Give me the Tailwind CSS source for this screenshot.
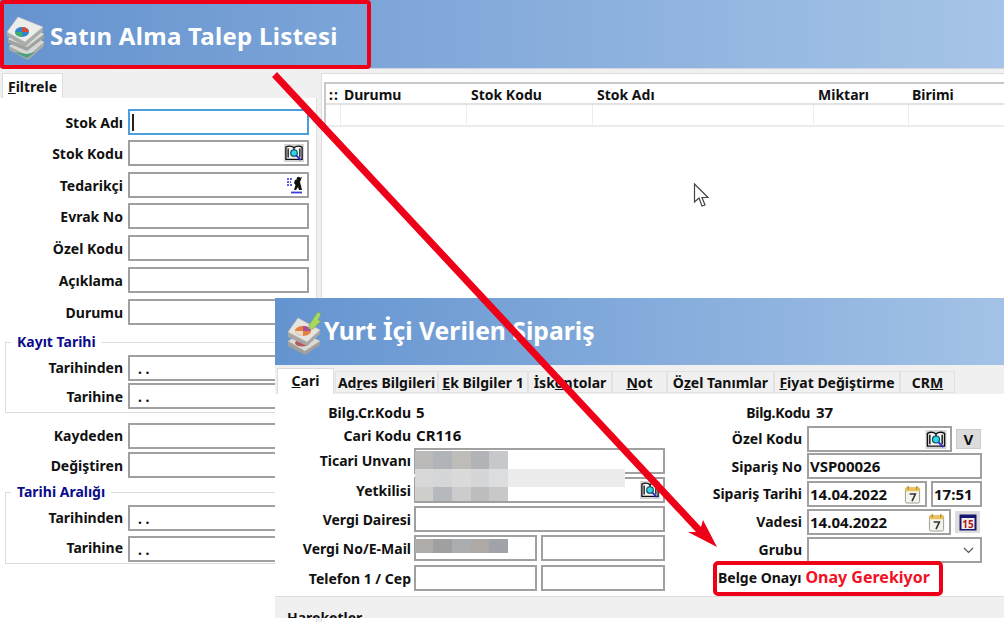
<!DOCTYPE html>
<html lang="tr">
<head>
<meta charset="utf-8">
<script src="https://cdn.jsdelivr.net/npm/@tailwindcss/browser@4"></script>
</head>
<body class="m-0 bg-white">
<svg width="0" height="0" class="absolute">
  <defs>
    <symbol id="book" viewBox="0 0 22 20">
      <rect width="22" height="20" fill="#d4d4d4"/>
      <path d="M2 3.500C5 2 8 2 11 4C14 2 17 2 20 3.500V17H2Z" fill="#f4f4f4" stroke="#111" stroke-width="1.500"/>
      <path d="M4.500 5V15M17.500 5V15M11 4V7" stroke="#222" stroke-width="1.600"/>
      <circle cx="11" cy="10" r="3.700" fill="#2fd6e8" stroke="#0a4a5a" stroke-width="1.200"/>
      <path d="M13.500 12.700L18.500 18" stroke="#2a2ad0" stroke-width="2"/>
    </symbol>
    <symbol id="cal" viewBox="0 0 18 20">
      <rect x="1.500" y="3" width="15" height="16" rx="1.500" fill="#f4f4ee" stroke="#9a9a8a"/>
      <rect x="1.500" y="2.500" width="15" height="4" fill="#ecc25a"/>
      <path d="M4.500 1V5M13.500 1V5" stroke="#b89030" stroke-width="1.400"/>
      <path d="M6 9.500H12L8.500 17" fill="none" stroke="#333" stroke-width="1.700"/>
    </symbol>
    <symbol id="stack" viewBox="0 0 42 46">
      <path d="M4 32L24 20L39 28V32L23 46L4 36Z" fill="#a8aca8"/>
      <path d="M4 32L24 19L39 28L23 42Z" fill="#d6d8d6"/>
      <path d="M3 25L22 12L39 20V24L22 37L3 29Z" fill="#9fa3a0"/>
      <path d="M3 25L22 11L39 20L22 33Z" fill="#dcdedc"/>
      <path d="M2 18L13 3L38 13V17L20 33L2 22Z" fill="#a9ada9"/>
      <path d="M2 18L13 3L38 13L20 28Z" fill="#eceeec" stroke="#bcbcbc" stroke-width="0.600"/>
      <ellipse cx="17" cy="18" rx="7" ry="5" fill="#2f86cc"/>
      <path d="M17 18L24 18A7 5 0 0 0 17 13Z" fill="#d84a3a"/>
      <path d="M17 18L10 18A7 5 0 0 0 17 23Z" fill="#3fae6a"/>
      <path d="M9 38L22 44L30 38L22 40Z" fill="#4aa080"/>
    </symbol>
    <symbol id="stack2" viewBox="0 0 38 50">
      <path d="M4 33L19 26L36 33V37L21 47L4 38Z" fill="#a2a09c"/>
      <path d="M4 33L19 25L36 33L21 43Z" fill="#dcdad6"/>
      <ellipse cx="18" cy="35" rx="7" ry="3.500" fill="#b45a60"/>
      <path d="M4 24L14 10L36 22V26L23 38L4 29Z" fill="#a8a6a2"/>
      <path d="M4 24L14 10L36 22L23 34Z" fill="#e6e4e0" stroke="#bbb" stroke-width="0.600"/>
      <ellipse cx="19" cy="23" rx="8" ry="5" fill="#e0803a"/>
      <path d="M19 23L27 23A8 5 0 0 0 19 18Z" fill="#b04a9a"/>
      <path d="M19 23L11 23A8 5 0 0 0 19 28Z" fill="#e8d8c8"/>
      <path d="M25 17L34 4L37 6L34 12L37 13L29 21L25 21Z" fill="#a8d860" stroke="#7aa848" stroke-width="0.600"/>
    </symbol>
  </defs>
</svg>

<div class="relative w-[1004px] h-[622px] overflow-hidden bg-[#f0f0f0] text-[14px] font-bold text-[#111] font-['Noto_Sans','Liberation_Sans',sans-serif]">

  <!-- main window title -->
  <header class="flex items-center h-[69px] pl-[5px] bg-gradient-to-r from-[#6593cf] to-[#a6c4e7] border-b border-[#cfd8e2]">
    <svg class="w-[42px] h-[46px] mt-[5px]"><use href="#stack"/></svg>
    <h1 class="ml-[3px] mt-[4px] text-[24px] leading-none font-bold text-white tracking-[0.300px]">Satın Alma Talep Listesi</h1>
  </header>

  <div class="flex h-[553px]">
    <!-- filter column -->
    <section class="w-[316px] ml-[2px] pt-[4px] flex flex-col">
      <div class="flex">
        <div class="w-[61px] h-[25px] bg-white border border-b-0 border-[#dcdcdc] pl-[5px] flex items-center"><span><u>F</u>iltrele</span></div>
      </div>
      <div class="flex-1 -ml-[2px] bg-white border-r border-[#dcdcdc] pt-[11px]">
        <div class="flex items-center h-[26px]"><label class="w-[123px] text-right">Stok Adı</label><div class="ml-[5px] w-[181px] h-[26px] border-2 border-[#4a9fdc] flex items-center pl-[2px]"><span class="w-[1.500px] h-[17px] bg-[#222]"></span></div></div>
        <div class="flex items-center h-[26px] mt-[5px]"><label class="w-[123px] text-right">Stok Kodu</label><div class="ml-[5px] w-[181px] h-[26px] border-2 border-[#a0a0a0] flex items-center justify-end pr-[3px]"><svg class="w-[20px] h-[18px]"><use href="#book"/></svg></div></div>
        <div class="flex items-center h-[26px] mt-[6px]"><label class="w-[123px] text-right">Tedarikçi</label><div class="ml-[5px] w-[181px] h-[26px] border-2 border-[#a0a0a0] flex items-center justify-end pr-[3px]">
          <svg width="18" height="18" viewBox="0 0 18 18"><path d="M1 3H7M1 6H5M1 9H6" stroke="#2a2ae8" stroke-width="1.300" stroke-dasharray="2 1"/><circle cx="12.500" cy="2.500" r="1.800" fill="#111"/><path d="M9 4L16 1L14 6L15 10L16 14H13L12 11L10 14H8L9.500 9L8 7Z" fill="#111"/><path d="M5 16.500H16" stroke="#3a3ae0" stroke-width="1.800"/></svg>
        </div></div>
        <div class="flex items-center h-[26px] mt-[5px]"><label class="w-[123px] text-right">Evrak No</label><div class="ml-[5px] w-[181px] h-[26px] border-2 border-[#a0a0a0]"></div></div>
        <div class="flex items-center h-[26px] mt-[6px]"><label class="w-[123px] text-right">Özel Kodu</label><div class="ml-[5px] w-[181px] h-[26px] border-2 border-[#a0a0a0]"></div></div>
        <div class="flex items-center h-[26px] mt-[6px]"><label class="w-[123px] text-right">Açıklama</label><div class="ml-[5px] w-[181px] h-[26px] border-2 border-[#a0a0a0]"></div></div>
        <div class="flex items-center h-[26px] mt-[6px]"><label class="w-[123px] text-right">Durumu</label><div class="ml-[5px] w-[181px] h-[26px] border-2 border-[#a0a0a0]"></div></div>

        <fieldset class="ml-[5px] mr-[4px] mt-[8px] border border-[#dcdcdc] pt-[4px] pb-[3px]">
          <legend class="ml-[5px] px-[6px] h-[18px] leading-[18px] text-[#0b0b8c]">Kayıt Tarihi</legend>
          <div class="flex items-center h-[26px]"><label class="w-[117px] text-right pb-[2px]">Tarihinden</label><div class="ml-[5px] w-[181px] h-[26px] border-2 border-[#a0a0a0] pl-[8px] flex items-center">. .</div></div>
          <div class="flex items-center h-[26px] mt-[2px]"><label class="w-[117px] text-right">Tarihine</label><div class="ml-[5px] w-[181px] h-[26px] border-2 border-[#a0a0a0] pl-[8px] flex items-center">. .</div></div>
        </fieldset>

        <div class="flex items-center h-[26px] mt-[10px]"><label class="w-[123px] text-right pb-[2px]">Kaydeden</label><div class="ml-[5px] w-[181px] h-[26px] border-2 border-[#a0a0a0]"></div></div>
        <div class="flex items-center h-[26px] mt-[3px]"><label class="w-[123px] text-right">Değiştiren</label><div class="ml-[5px] w-[181px] h-[26px] border-2 border-[#a0a0a0]"></div></div>

        <fieldset class="ml-[5px] mr-[4px] mt-[5px] border border-[#dcdcdc] pt-[4px] pb-[1px]">
          <legend class="ml-[5px] px-[6px] h-[18px] leading-[18px] text-[#0b0b8c]">Tarihi Aralığı</legend>
          <div class="flex items-center h-[26px]"><label class="w-[117px] text-right pb-[2px]">Tarihinden</label><div class="ml-[5px] w-[181px] h-[26px] border-2 border-[#a0a0a0] pl-[8px] flex items-center">. .</div></div>
          <div class="flex items-center h-[26px] mt-[5px]"><label class="w-[117px] text-right pb-[4px]">Tarihine</label><div class="ml-[5px] w-[181px] h-[26px] border-2 border-[#a0a0a0] pl-[8px] flex items-center">. .</div></div>
        </fieldset>
      </div>
    </section>

    <!-- list column -->
    <section class="ml-[4px] mt-[4px] flex-1 bg-white border-l border-t border-[#dcdcdc] pt-[8px] pl-[2px]">
      <div class="border-t-2 border-l-2 border-[#c8c8c8]">
        <div class="grid grid-cols-[15px_126px_126px_221px_95px_95px] h-[21px] items-center border-b-2 border-[#e2e2e2]">
          <span class="pl-[3px] tracking-[1px]">::</span>
          <span class="pl-[3px]">Durumu</span>
          <span class="pl-[4px]">Stok Kodu</span>
          <span class="pl-[4px]">Stok Adı</span>
          <span class="pl-[4px]">Miktarı</span>
          <span class="pl-[3px]">Birimi</span>
        </div>
        <div class="grid grid-cols-[15px_126px_126px_221px_95px_95px] h-[22px] border-b-2 border-[#ececec]">
          <span class="border-r border-[#ececec]"></span>
          <span class="border-r border-[#ececec]"></span>
          <span class="border-r border-[#ececec]"></span>
          <span class="border-r border-[#ececec]"></span>
          <span class="border-r border-[#ececec]"></span>
          <span></span>
        </div>
      </div>
    </section>
  </div>

  <!-- mouse cursor -->
  <svg class="absolute left-[693px] top-[183px]" width="17" height="25" viewBox="0 0 17 25"><path d="M1.500 1V19L6 15L9 23L12 22L9 14.500H15Z" fill="#fff" stroke="#444" stroke-width="1.200"/></svg>

  <!-- order window, floating over the list -->
  <article class="absolute left-[275px] top-[298px] w-[729px] h-[320px] flex flex-col bg-white">
    <header class="flex items-center h-[67px] pl-[9px] bg-gradient-to-r from-[#6494d0] to-[#a3c2e6]">
      <svg class="w-[38px] h-[50px] mt-[3px] shrink-0"><use href="#stack2"/></svg>
      <h2 class="ml-[2px] text-[24.700px] leading-none font-bold text-white">Yurt İçi Verilen Sipariş</h2>
    </header>
    <nav class="relative flex items-end h-[29px] pl-[2px] bg-[#f0f0f0]">
      <div class="w-[57px] h-[26px] bg-white border border-b-0 border-[#dcdcdc] flex items-center justify-center pb-[3px]"><span><u>C</u>ari</span></div>
      <div class="w-[103px] h-[22px] ml-[1px] mb-[1px] border border-[#e2e2e2] flex items-center justify-center"><span>Ad<u>r</u>es Bilgileri</span></div>
      <div class="w-[90px] h-[22px] mb-[1px] border border-[#e2e2e2] flex items-center justify-center"><span><u>E</u>k Bilgiler 1</span></div>
      <div class="w-[84px] h-[22px] mb-[1px] border border-[#e2e2e2] flex items-center justify-center"><span>İsk<u>o</u>ntolar</span></div>
      <div class="w-[55px] h-[22px] mb-[1px] border border-[#e2e2e2] flex items-center justify-center"><span><u>N</u>ot</span></div>
      <div class="w-[107px] h-[22px] mb-[1px] border border-[#e2e2e2] flex items-center justify-center"><span>Ö<u>z</u>el Tanımlar</span></div>
      <div class="w-[126px] h-[22px] mb-[1px] border border-[#e2e2e2] flex items-center justify-center"><span><u>F</u>iyat Değiştirme</span></div>
      <div class="w-[55px] h-[22px] mb-[1px] border border-[#e2e2e2] flex items-center justify-center"><span>CR<u>M</u></span></div>
    </nav>
    <div class="relative flex h-[203px] bg-white border-b border-[#dcdcdc]">
      <!-- left column -->
      <div class="w-[390px] pt-[7px]">
        <div class="flex h-[22px] items-center"><span class="w-[136px] text-right">Bilg.Cr.Kodu</span><span class="ml-[5px] text-[15px]">5</span></div>
        <div class="flex h-[22px] mt-[1px] items-center"><span class="w-[136px] text-right">Cari Kodu</span><span class="ml-[5px] text-[15px]">CR116</span></div>
        <div class="flex h-[26px] mt-[2px] items-center"><label class="w-[136px] text-right pb-[2px]">Ticari Unvanı</label><div class="ml-[3px] w-[251px] h-[26px] border-2 border-[#a0a0a0]"></div></div>
        <div class="flex h-[26px] mt-[3px] items-center"><label class="w-[136px] text-right">Yetkilisi</label><div class="ml-[3px] w-[251px] h-[26px] border-2 border-[#a0a0a0] flex items-center justify-end pr-[3px]"><svg class="w-[20px] h-[18px]"><use href="#book"/></svg></div></div>
        <div class="flex h-[26px] mt-[3px] items-center"><label class="w-[136px] text-right">Vergi Dairesi</label><div class="ml-[3px] w-[251px] h-[26px] border-2 border-[#a0a0a0]"></div></div>
        <div class="flex h-[26px] mt-[3px] items-center"><label class="w-[136px] text-right">Vergi No/E-Mail</label><div class="ml-[3px] w-[123px] h-[26px] border-2 border-[#a0a0a0]"></div><div class="ml-[4px] w-[124px] h-[26px] border-2 border-[#a0a0a0]"></div></div>
        <div class="flex h-[26px] mt-[4px] items-center"><label class="w-[136px] text-right">Telefon 1 / Cep</label><div class="ml-[3px] w-[123px] h-[26px] border-2 border-[#a0a0a0]"></div><div class="ml-[4px] w-[124px] h-[26px] border-2 border-[#a0a0a0]"></div></div>
      </div>
      <!-- right column -->
      <div class="flex-1 pt-[7px]">
        <div class="flex h-[22px] items-center"><span class="w-[145px] text-right tracking-[-0.300px]">Bilg.Kodu</span><span class="ml-[6px] text-[15px]">37</span></div>
        <div class="flex h-[26px] mt-[3px] items-center"><label class="w-[137px] text-right pb-[2px]">Özel Kodu</label><div class="ml-[5px] w-[145px] h-[26px] border-2 border-[#a0a0a0] flex items-center justify-end pr-[3px]"><svg class="w-[22px] h-[19px]"><use href="#book"/></svg></div><button class="ml-[4px] w-[25px] h-[20px] bg-[#dcdcdc] border border-[#ccc] text-[15px] leading-none font-bold">V</button></div>
        <div class="flex h-[26px] mt-[1px] items-center"><label class="w-[137px] text-right">Sipariş No</label><div class="ml-[5px] w-[175px] h-[26px] border-2 border-[#a0a0a0] pl-[1px] flex items-center text-[15px]">VSP00026</div></div>
        <div class="flex h-[26px] mt-[2px] items-center"><label class="w-[137px] text-right pb-[2px]">Sipariş Tarihi</label><div class="ml-[5px] w-[120px] h-[26px] border-2 border-[#a0a0a0] pl-[1px] pr-[4px] flex items-center justify-between text-[15px]">14.04.2022<svg class="w-[17px] h-[19px]"><use href="#cal"/></svg></div><div class="ml-[4px] w-[51px] h-[26px] border-2 border-[#a0a0a0] pl-[1px] flex items-center text-[15px]">17:51</div></div>
        <div class="flex h-[26px] mt-[2px] items-center"><label class="w-[137px] text-right pb-[2px]">Vadesi</label><div class="ml-[5px] w-[144px] h-[26px] border-2 border-[#a0a0a0] pl-[1px] pr-[4px] flex items-center justify-between text-[15px]">14.04.2022<svg class="w-[17px] h-[19px]"><use href="#cal"/></svg></div><button class="ml-[4px] w-[25px] h-[22px] bg-[#dcdcdc] flex items-center justify-center"><svg width="18" height="17" viewBox="0 0 18 17"><rect x="0.500" y="0.500" width="17" height="16" fill="#16166e"/><rect x="2.500" y="4" width="13" height="11" fill="#f4ecec"/><text x="9" y="13.500" text-anchor="middle" font-size="10" font-weight="700" fill="#b01818">15</text></svg></button></div>
        <div class="flex h-[26px] mt-[2px] items-center"><label class="w-[137px] text-right pb-[2px]">Grubu</label><div class="ml-[5px] w-[175px] h-[26px] border-2 border-[#a0a0a0] flex items-center justify-end pr-[6px]"><svg width="11" height="7" viewBox="0 0 11 7"><path d="M1 1L5.500 5.500L10 1" fill="none" stroke="#555" stroke-width="1.200"/></svg></div></div>
        <div class="flex items-center mt-[1px] ml-[53px] h-[26px] whitespace-nowrap"><span>Belge Onayı</span><span class="ml-[4px] text-[16px] text-[#f41024]">Onay Gerekiyor</span></div>
      </div>

      <!-- pixelated redaction -->
      <div class="absolute left-[140px] top-[57px] grid grid-cols-[18px_19px_19px_18px_19px] grid-rows-[18px_18px_14px]">
        <i class="bg-[#bcbab8]"></i><i class="bg-[#b0b4b8]"></i><i class="bg-[#bdbcb8]"></i><i class="bg-[#b1b3b6]"></i><i class="bg-[#c6c8cc]"></i>
        <i class="bg-[#d8d8d8]"></i><i class="bg-[#d4d6d8]"></i><i class="bg-[#dadada]"></i><i class="bg-[#d4d6d8]"></i><i class="bg-[#dcdddf]"></i>
        <i class="bg-[#cfd0cc]"></i><i class="bg-[#b5b9bd]"></i><i class="bg-[#cccccc]"></i><i class="bg-[#bdbdbd]"></i><i class="bg-[#c8c8c8]"></i>
      </div>
      <div class="absolute left-[233px] top-[75px] w-[117px] h-[18px] bg-[#ececec]"></div>
      <div class="absolute left-[140px] top-[145px] grid grid-cols-[18px_19px_19px_18px_19px] grid-rows-[14px]">
        <i class="bg-[#b0aca9]"></i><i class="bg-[#a0a0a0]"></i><i class="bg-[#abaeb1]"></i><i class="bg-[#aea9a5]"></i><i class="bg-[#a0a4a8]"></i>
      </div>
    </div>
    <div class="flex-1 overflow-hidden bg-[#f0f0f0] pl-[12px] pt-[13px] leading-[16px]">Hareketler</div>
  </article>

  <!-- red annotations -->
  <div class="absolute left-0 top-0 w-[371px] h-[69px] border-4 border-[#ee0018] rounded-[4px]"></div>
  <div class="absolute left-[713px] top-[561px] w-[230px] h-[35px] border-4 border-[#ee0018] rounded-[5px]"></div>
  <svg class="absolute left-0 top-0" width="1004" height="622" viewBox="0 0 1004 622">
    <path d="M272 77L277 72L701 527L703 520L717 547L688 532L696 532Z" fill="#ee0018"/>
  </svg>
</div>
</body>
</html>
